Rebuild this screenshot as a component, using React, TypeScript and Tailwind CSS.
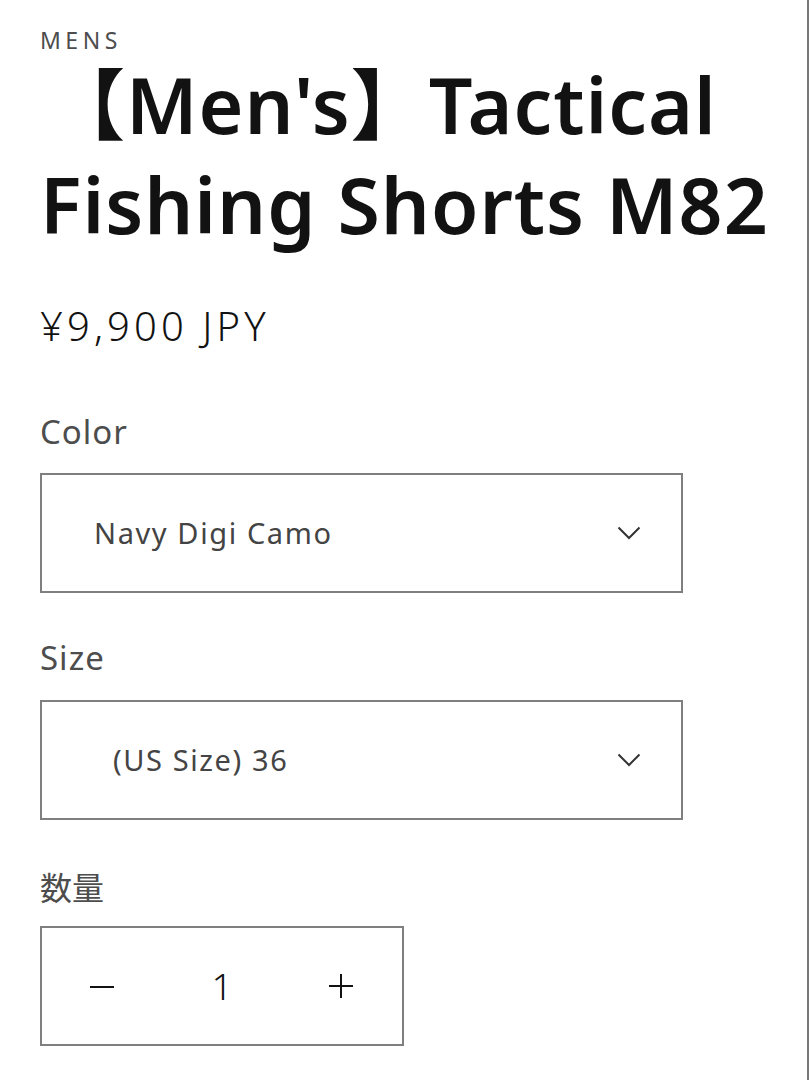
import React from 'react'

const font = { fontFamily: '"Noto Sans", "Noto Sans CJK JP", sans-serif' }

function Chevron() {
  return (
    <svg width="24" height="14" viewBox="0 0 24 14" fill="none" className="shrink-0">
      <path d="M1.5 1.5 L12 12 L22.5 1.5" stroke="#333" strokeWidth="2" />
    </svg>
  )
}

function SelectBox({ value, indent }: { value: string; indent: string }) {
  return (
    <div className="flex h-[120px] w-[643px] items-center border-2 border-[#7f7f7f] pr-[40px]">
      <span className={`flex-1 text-[29px] leading-[36px] tracking-[1.6px] text-[#444] ${indent}`}>{value}</span>
      <Chevron />
    </div>
  )
}

export default function App() {
  return (
    <div className="min-h-[1080px] w-[809px] border-r-2 border-[#777] bg-white pl-[40px] pt-[25px]" style={font}>
      <p className="text-[23px] leading-[30px] tracking-[4.5px] text-[#4d4d4d]">MENS</p>

      <h1 className="indent-[8px] text-[77px] font-semibold leading-[100px] tracking-[1px] text-[#121212]">
        【Men's】Tactical Fishing Shorts M82
      </h1>

      <p className="mt-[46px] text-[40px] font-light leading-[50px] tracking-[4.1px] text-[#121212]">¥9,900 JPY</p>

      <p className="mt-[61px] text-[33px] leading-[40px] tracking-[1px] text-[#4d4d4d]">Color</p>
      <div className="mt-[21px]">
        <SelectBox value="Navy Digi Camo" indent="pl-[52px]" />
      </div>

      <p className="mt-[45px] text-[33px] leading-[40px] tracking-[1px] text-[#4d4d4d]">Size</p>
      <div className="mt-[22px]">
        <SelectBox value="(US Size) 36" indent="pl-[71px]" />
      </div>

      <p className="mt-[48px] text-[32px] leading-[40px] text-[#4d4d4d]">数量</p>
      <div className="mt-[18px] flex h-[120px] w-[364px] items-center border-2 border-[#7f7f7f]">
        <button className="flex w-[120px] items-center justify-center pt-[2px]">
          <svg width="24" height="4" viewBox="0 0 24 4">
            <path d="M0 2 H24" stroke="#121212" strokeWidth="2" />
          </svg>
        </button>
        <span className="flex-1 text-center text-[37px] font-light leading-[44px] text-[#121212]">1</span>
        <button className="flex w-[120px] items-center justify-center pr-[2px]">
          <svg width="24" height="24" viewBox="0 0 24 24">
            <path d="M0 12 H24 M12 0 V24" stroke="#121212" strokeWidth="2" />
          </svg>
        </button>
      </div>
    </div>
  )
}
